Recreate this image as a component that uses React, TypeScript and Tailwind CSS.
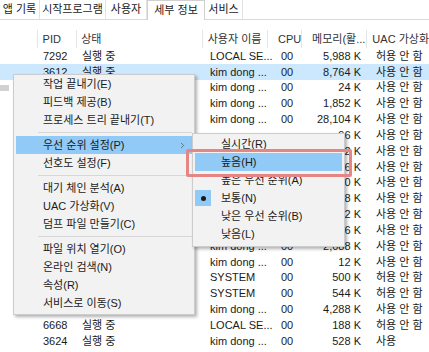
import { ChevronRight } from 'lucide-react'

interface Row {
  pid: string
  status: string
  user: string
  cpu: string
  memory: string
  uac: string
}

const rows: Row[] = [
  { pid: '7292', status: '실행 중', user: 'LOCAL SE...', cpu: '00', memory: '5,988 K', uac: '허용 안 함' },
  { pid: '3612', status: '실행 중', user: 'kim dong ...', cpu: '00', memory: '8,764 K', uac: '사용 안 함' },
  { pid: '', status: '', user: 'kim dong ...', cpu: '00', memory: '24 K', uac: '사용 안 함' },
  { pid: '', status: '', user: 'kim dong ...', cpu: '00', memory: '1,852 K', uac: '사용 안 함' },
  { pid: '', status: '', user: 'kim dong ...', cpu: '00', memory: '28,104 K', uac: '사용 안 함' },
  // 아래 행들은 하위 메뉴에 가려짐
  { pid: '', status: '', user: '', cpu: '', memory: '96 K', uac: '사용 안 함' },
  { pid: '', status: '', user: '', cpu: '', memory: '52 K', uac: '사용 안 함' },
  { pid: '', status: '', user: '', cpu: '', memory: '16 K', uac: '사용 안 함' },
  { pid: '', status: '', user: '', cpu: '', memory: '80 K', uac: '사용 안 함' },
  { pid: '', status: '', user: '', cpu: '', memory: '48 K', uac: '사용 안 함' },
  { pid: '', status: '', user: '', cpu: '', memory: '72 K', uac: '사용 안 함' },
  { pid: '', status: '', user: '', cpu: '', memory: '16 K', uac: '사용 안 함' },
  { pid: '', status: '', user: 'kim dong ...', cpu: '00', memory: '2,088 K', uac: '사용 안 함' },
  { pid: '', status: '', user: 'kim dong ...', cpu: '00', memory: '12 K', uac: '사용 안 함' },
  { pid: '', status: '', user: 'SYSTEM', cpu: '00', memory: '500 K', uac: '허용 안 함' },
  { pid: '', status: '', user: 'SYSTEM', cpu: '00', memory: '544 K', uac: '허용 안 함' },
  { pid: '7068', status: '실행 중', user: 'kim dong ...', cpu: '00', memory: '4,288 K', uac: '사용 안 함' },
  { pid: '6668', status: '실행 중', user: 'LOCAL SE...', cpu: '00', memory: '188 K', uac: '허용 안 함' },
  { pid: '3624', status: '실행 중', user: 'kim dong ...', cpu: '00', memory: '528 K', uac: '사용' },
]

const tabs = [
  { label: '앱 기록', w: 'w-[40px]' },
  { label: '시작프로그램', w: 'w-[66px]' },
  { label: '사용자', w: 'w-[41px]' },
  { label: '세부 정보', w: 'w-[58px]' },
  { label: '서비스', w: 'w-[38px]' },
]

// 메인 컨텍스트 메뉴 (null = 구분선)
const menuItems: (string | null)[] = [
  '작업 끝내기(E)',
  '피드백 제공(B)',
  '프로세스 트리 끝내기(T)',
  null,
  '우선 순위 설정(P)',
  '선호도 설정(F)',
  null,
  '대기 체인 분석(A)',
  'UAC 가상화(V)',
  '덤프 파일 만들기(C)',
  null,
  '파일 위치 열기(O)',
  '온라인 검색(N)',
  '속성(R)',
  '서비스로 이동(S)',
]

const priorityItems = ['실시간(R)', '높음(H)', '높은 우선 순위(A)', '보통(N)', '낮은 우선 순위(B)', '낮음(L)']

export default function App() {
  return (
    <div className="relative w-[429px] h-[352px] overflow-hidden bg-white text-[11px] text-[#1a1a1a] font-['Liberation_Sans','Noto_Sans_CJK_KR',sans-serif]">
      {/* 탭 */}
      <div className="flex h-[20px] items-stretch border-b border-[#dadada] bg-white">
        {tabs.map((t) => (
          <div
            key={t.label}
            className={`${t.w} flex items-center justify-center whitespace-nowrap ${
              t.label === '세부 정보' ? 'bg-white border-x border-t border-[#d0d0d0] -mb-px' : 'border-r border-[#e3e3e3]'
            }`}
          >
            {t.label}
          </div>
        ))}
      </div>

      {/* 헤더 */}
      <div className="mt-[10px] flex h-[18px] items-center text-[#333]">
        <div className="w-[38px] h-full border-r border-[#e5e5e5]" />
        <div className="w-[40px] h-full flex items-center pl-[5px] border-r border-[#e5e5e5]">PID</div>
        <div className="w-[127px] h-full flex items-center pl-[4px] border-r border-[#e5e5e5]">상태</div>
        <div className="w-[66px] h-full flex items-center pl-[5px] border-r border-[#e5e5e5] whitespace-nowrap">사용자 이름</div>
        <div className="w-[34px] h-full flex items-center pl-[10px] border-r border-[#e5e5e5]">CPU</div>
        <div className="w-[66px] h-full flex items-center pl-[10px] border-r border-[#e5e5e5] whitespace-nowrap overflow-hidden">메모리(활...</div>
        <div className="flex-1 h-full flex items-center pl-[5px] whitespace-nowrap">UAC 가상화</div>
      </div>

      {/* 행 */}
      <div className="flex flex-col">
        {rows.map((r, i) => (
          <div key={i} className={`flex h-[15.85px] items-center whitespace-nowrap ${i === 1 ? 'bg-[#cce8ff]' : ''}`}>
            <div className="w-[38px]">{i === 2 && <div className="h-[6px] w-[9px] bg-[#d2d2d2]" />}</div>
            <div className="w-[40px] pl-[5px]">{r.pid}</div>
            <div className="w-[127px] pl-[4px]">{r.status}</div>
            <div className="w-[66px] pl-[5px]">{r.user}</div>
            <div className="w-[34px] pl-[10px]">{r.cpu}</div>
            <div className="w-[66px] pr-[10px] text-right">{r.memory}</div>
            <div className="flex-1 pl-[5px]">{r.uac}</div>
          </div>
        ))}
      </div>

      {/* 컨텍스트 메뉴 */}
      <div className="absolute left-[13px] top-[74px] w-[182px] border border-[#cccccc] bg-[#f2f2f2] px-[2px] pb-[2px] shadow-[2px_2px_3px_rgba(0,0,0,0.3)]">
        {menuItems.map((item, i) =>
          item === null ? (
            <div key={i} className="flex h-[7px] items-center pl-[22px]">
              <div className="h-px w-full bg-[#d7d7d7]" />
            </div>
          ) : (
            <div
              key={i}
              className={`flex h-[18px] items-center pl-[27px] pr-[5px] whitespace-nowrap ${item === '우선 순위 설정(P)' ? 'bg-[#91c9f7]' : ''}`}
            >
              <span className="flex-1">{item}</span>
              {item === '우선 순위 설정(P)' && <ChevronRight size={9} strokeWidth={1.5} className="text-[#333]" />}
            </div>
          )
        )}
      </div>

      {/* 우선 순위 하위 메뉴 */}
      <div className="absolute left-[192px] top-[133px] w-[153px] border border-[#cccccc] bg-[#f2f2f2] px-[2px] pt-[1px] pb-[3px] shadow-[2px_2px_3px_rgba(0,0,0,0.3)]">
        {priorityItems.map((item) => (
          <div
            key={item}
            className={`relative flex h-[18px] items-center pl-[26px] whitespace-nowrap ${item === '높음(H)' ? 'bg-[#91c9f7]' : ''}`}
          >
            {item === '보통(N)' && (
              <div className="absolute left-0 top-[1px] flex h-[16px] w-[16px] items-center justify-center bg-[#91c9f7]">
                <div className="h-[5px] w-[5px] rounded-full bg-[#1a1a1a]" />
              </div>
            )}
            {item}
          </div>
        ))}
      </div>

      {/* 강조 표시 */}
      <div className="absolute left-[186px] top-[149px] h-[28px] w-[166px] rounded-[2px] border-[3px] border-[#e58585]" />
    </div>
  )
}
